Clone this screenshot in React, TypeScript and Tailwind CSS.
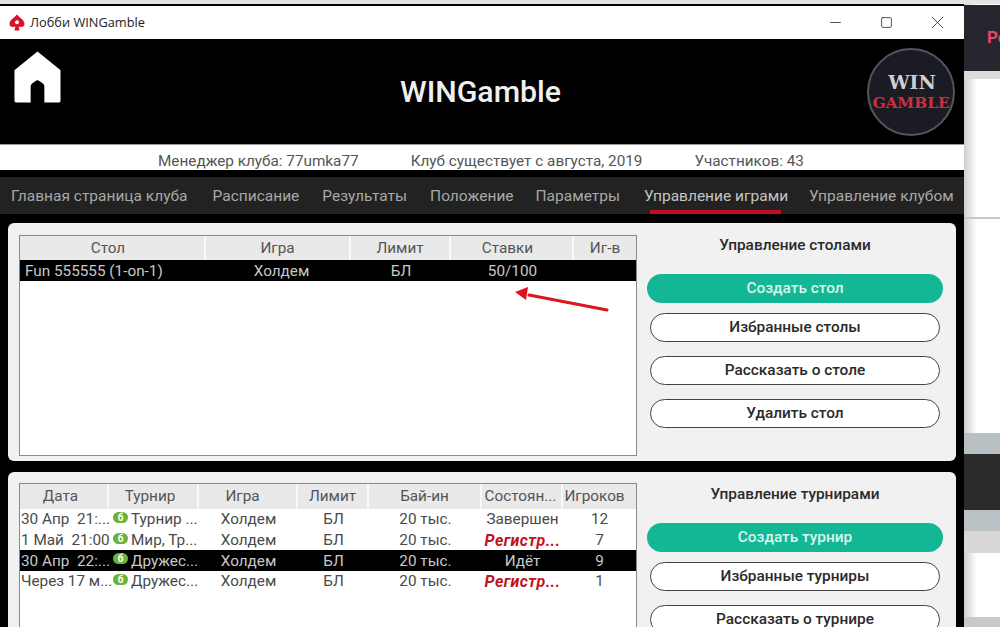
import React from 'react';
import { Minus, Square, X } from 'lucide-react';

type Cell = { text: string; align?: 'left' | 'center'; kind?: 'reg'; badge?: boolean };
type Row = { cells: Cell[]; selected?: boolean };

const navItems = [
  { label: 'Главная страница клуба', margin: 'ml-[11px]' },
  { label: 'Расписание', margin: 'ml-[25px]' },
  { label: 'Результаты', margin: 'ml-[23px]' },
  { label: 'Положение', margin: 'ml-[23px]' },
  { label: 'Параметры', margin: 'ml-[22px]' },
  { label: 'Управление играми', margin: 'ml-[24px]', active: true },
  { label: 'Управление клубом', margin: 'ml-[21px]' },
];

const tournamentRows: Row[] = [
  {
    cells: [
      { text: '30 Апр\u00a0\u00a021:...', align: 'left' },
      { text: 'Турнир ...', badge: true },
      { text: 'Холдем' },
      { text: 'БЛ' },
      { text: '20 тыс.' },
      { text: 'Завершен' },
      { text: '12' },
    ],
  },
  {
    cells: [
      { text: '1 Май\u00a0\u00a021:00', align: 'left' },
      { text: 'Мир, Тр...', badge: true },
      { text: 'Холдем' },
      { text: 'БЛ' },
      { text: '20 тыс.' },
      { text: 'Регистр...', kind: 'reg' },
      { text: '7' },
    ],
  },
  {
    selected: true,
    cells: [
      { text: '30 Апр\u00a0\u00a022:...', align: 'left' },
      { text: 'Дружес...', badge: true },
      { text: 'Холдем' },
      { text: 'БЛ' },
      { text: '20 тыс.' },
      { text: 'Идёт' },
      { text: '9' },
    ],
  },
  {
    cells: [
      { text: 'Через 17 м...', align: 'left' },
      { text: 'Дружес...', badge: true },
      { text: 'Холдем' },
      { text: 'БЛ' },
      { text: '20 тыс.' },
      { text: 'Регистр...', kind: 'reg' },
      { text: '1' },
    ],
  },
];

const HomeIcon = () => (
  <svg width="47" height="52" viewBox="0 0 48 53" className="block">
    <path
      d="M24 0.5 L47 19 Q47.5 19.5 47.5 20.5 L47.5 51 Q47.5 52.5 46 52.5 L31 52.5 L31 36 Q31 33 24 29.5 Q17 33 17 36 L17 52.5 L2 52.5 Q0.5 52.5 0.5 51 L0.5 20.5 Q0.5 19.5 1 19 Z"
      fill="#fff"
    />
  </svg>
);

const SpadeIcon = () => (
  <svg width="16" height="18" viewBox="0 0 16 18" className="block">
    <path
      d="M8 0.5 C10 3.5 15.5 5.5 15.5 10 C15.5 12.8 12.2 14 9.6 12.2 L10.6 16.5 L5.4 16.5 L6.4 12.2 C3.8 14 0.5 12.8 0.5 10 C0.5 5.5 6 3.5 8 0.5 Z"
      fill="#d8122a"
    />
    <circle cx="8" cy="8.2" r="2" fill="#fff" />
  </svg>
);

const Logo = () => (
  <div className="w-[88px] h-[88px] rounded-full bg-[#1b1b23] border-2 border-[#55555c] flex flex-col items-center justify-center font-['DejaVu_Serif',serif] font-bold">
    <div className="text-[#cfcfcf] text-[19px] leading-[22px] ml-[2px]">WIN</div>
    <div className="text-[#cf2f3c] text-[15.3px] leading-[20px]">GAMBLE</div>
  </div>
);

const GreenBadge = () => (
  <span className="inline-flex w-[15px] h-[11px] rounded-full bg-[#6bb23a] text-white text-[10px] leading-[11px] font-bold items-center justify-center mr-[3px] -mt-[5px] shrink-0">
    б
  </span>
);

const ActionButton = ({ label, primary }: { label: string; primary?: boolean }) =>
  primary ? (
    <button className="w-[296px] h-[29px] pt-[1px] rounded-full bg-[#14b795] text-[#d9f5ee] text-[15.4px] font-medium leading-none">
      {label}
    </button>
  ) : (
    <button className="w-[290px] h-[29px] pt-[1px] rounded-full bg-white border border-[#444] text-[#2a2a2a] text-[15.4px] font-medium leading-none">
      {label}
    </button>
  );

const HeaderCell = ({ label, className }: { label: string; className?: string }) => (
  <div className={`bg-[#e9e9e9] flex items-center justify-center text-[#555] text-[15.3px] border-r-2 border-white/70 last:border-r-0 whitespace-nowrap ${className ?? ''}`}>
    {label}
  </div>
);

const TournamentCell = ({ cell, selected }: { cell: Cell; selected?: boolean }) => {
  let tone = selected ? 'text-[#c8c8c8] text-[15.3px]' : 'text-[#4a4a4a] text-[15.3px]';
  if (cell.kind === 'reg') tone = 'text-[#c0141c] italic font-bold text-[16px] tracking-[0.4px]';
  return (
    <div className={`flex items-center whitespace-nowrap leading-[19px] pt-[1px] ${tone} ${cell.align === 'left' ? 'pl-[1px]' : cell.badge ? 'pl-[4px]' : 'justify-center'}`}>
      {cell.badge && <GreenBadge />}
      {cell.text}
    </div>
  );
};

export default function App() {
  return (
    <div className="w-[1000px] h-[627px] overflow-hidden flex flex-col bg-[#e2e2e2] font-['Roboto',sans-serif]">
      <div className="h-[4px] shrink-0 bg-[#e4e4e4]" />
      <div className="flex flex-1 min-h-0 items-start">
        {/* Lobby window */}
        <div className="w-[964px] h-[623px] shrink-0 bg-black flex flex-col">
          <div className="h-[2px] shrink-0 bg-black" />

          {/* Title bar */}
          <div className="h-[33px] shrink-0 bg-white flex items-center pl-[9px] text-[#222] font-['Open_Sans',sans-serif]">
            <SpadeIcon />
            <span className="ml-[5px] text-[12.8px]">Лобби WINGamble</span>
            <div className="ml-auto flex items-center pr-[1px] text-[#222]">
              <div className="w-[51px] flex justify-center"><Minus size={17} strokeWidth={1.1} /></div>
              <div className="w-[51px] flex justify-center"><Square size={13} strokeWidth={1.4} /></div>
              <div className="w-[51px] flex justify-center"><X size={21} strokeWidth={0.9} /></div>
            </div>
          </div>

          {/* Club header */}
          <div className="h-[105px] shrink-0 bg-black relative flex items-center justify-center">
            <div className="absolute left-[14px] top-[12px]">
              <HomeIcon />
            </div>
            <h1 className="text-[30.3px] font-medium text-[#f0f0f0] -ml-[3px]">WINGamble</h1>
            <div className="absolute left-[867px] top-[9px]">
              <Logo />
            </div>
          </div>

          {/* Club info */}
          <div className="h-[26px] shrink-0 bg-white border-t border-[#999] flex items-center text-[15.3px] text-[#555] pl-[158px] pt-[7px]">
            <span>Менеджер клуба: 77umka77</span>
            <span className="ml-[52px]">Клуб существует с августа, 2019</span>
            <span className="ml-[52px]">Участников: 43</span>
          </div>

          {/* Tabs */}
          <div className="h-[37px] shrink-0 mt-[7px] bg-[#222222] flex items-stretch text-[15.5px] text-[#a8a8a8] whitespace-nowrap">
            {navItems.map((item) => (
              <div key={item.label} className={`relative flex items-center pt-[2px] ${item.margin} ${item.active ? 'text-[#c4c4c4]' : ''}`}>
                {item.label}
                {item.active && <div className="absolute left-[6px] right-[7px] bottom-0 h-[4px] bg-[#c20f25]" />}
              </div>
            ))}
          </div>

          {/* Tables panel */}
          <div className="h-[238px] shrink-0 mt-[9px] mx-[8px] bg-[#f1f1f1] rounded-[6px] flex pl-[11px] pt-[12px]">
            <div className="relative w-[618px] h-[221px] bg-white border border-[#8a8a8a] shrink-0">
              <div className="grid grid-cols-[186px_145px_100px_123px_1fr] h-[24px]">
                <HeaderCell label="Стол" className="pr-[8px]" />
                <HeaderCell label="Игра" />
                <HeaderCell label="Лимит" />
                <HeaderCell label="Ставки" className="pr-[8px]" />
                <HeaderCell label="Иг-в" />
              </div>
              <div className="grid grid-cols-[186px_145px_100px_123px_1fr] h-[21px] bg-black text-[#c8c8c8] text-[15.3px] items-center">
                <div className="pl-[5px] whitespace-nowrap">Fun 555555 (1-on-1)</div>
                <div className="text-center pl-[6px]">Холдем</div>
                <div className="text-center">БЛ</div>
                <div className="text-center">50/100</div>
                <div />
              </div>
              <svg width="100" height="30" viewBox="0 0 100 30" className="absolute left-[494px] top-[49px]">
                <path d="M93 25 L15 10" stroke="#de1520" strokeWidth="3" strokeLinecap="round" />
                <path d="M1 7 L14 2 L12 15 Z" fill="#de1520" />
              </svg>
            </div>
            <div className="flex-1 flex flex-col items-center pl-[10px] pr-[14px]">
              <div className="h-[22px] flex items-center text-[15.4px] font-medium text-[#2a2a2a]">Управление столами</div>
              <div className="mt-[17px] flex flex-col items-center gap-[14px]">
                <ActionButton label="Создать стол" primary />
                <div className="-mt-[4px]">
                  <ActionButton label="Избранные столы" />
                </div>
                <ActionButton label="Рассказать о столе" />
                <ActionButton label="Удалить стол" />
              </div>
            </div>
          </div>

          {/* Tournaments panel */}
          <div className="h-[240px] shrink-0 mt-[11px] mx-[8px] bg-[#f1f1f1] rounded-[6px] flex pl-[11px] pt-[11px]">
            <div className="w-[618px] h-[221px] bg-white border border-[#8a8a8a] shrink-0">
              <div className="grid grid-cols-[89px_90px_99px_71px_113px_81px_1fr] h-[25px]">
                <HeaderCell label="Дата" className="pr-[6px]" />
                <HeaderCell label="Турнир" className="pr-[6px]" />
                <HeaderCell label="Игра" className="pr-[10px]" />
                <HeaderCell label="Лимит" />
                <HeaderCell label="Бай-ин" />
                <HeaderCell label="Состоян..." className="pr-[2px]" />
                <HeaderCell label="Игроков" className="pr-[10px]" />
              </div>
              {tournamentRows.map((row, i) => (
                <div key={i} className={`grid grid-cols-[89px_90px_99px_71px_113px_81px_1fr] h-[20.7px] ${row.selected ? 'bg-black' : ''}`}>
                  {row.cells.map((cell, j) => (
                    <TournamentCell key={j} cell={cell} selected={row.selected} />
                  ))}
                </div>
              ))}
            </div>
            <div className="flex-1 flex flex-col items-center pl-[10px] pr-[14px]">
              <div className="h-[22px] flex items-center pt-[1px] text-[15.4px] font-medium text-[#2a2a2a]">Управление турнирами</div>
              <div className="mt-[18px] flex flex-col items-center gap-[14px]">
                <ActionButton label="Создать турнир" primary />
                <div className="-mt-[4px]">
                  <ActionButton label="Избранные турниры" />
                </div>
                <ActionButton label="Рассказать о турнире" />
              </div>
            </div>
          </div>
        </div>

        {/* Page behind the window */}
        <div className="flex-1 h-[623px] flex flex-col bg-gradient-to-r from-[#cfcfcf] via-white via-30% to-white">
          <div className="h-[66px] shrink-0 mt-[1px] bg-[#26262e] flex items-center pl-[23px] text-[17px] font-bold text-[#e8476a] overflow-hidden">
            Ре
          </div>
          <div className="h-[8px] shrink-0 bg-[#dcdcdc]" />
          <div className="h-[138px] shrink-0" />
          <div className="h-[2px] shrink-0 bg-[#c8c8c8]" />
          <div className="h-[214px] shrink-0" />
          <div className="h-[21px] shrink-0 bg-[#b9c0c3]" />
          <div className="h-[56px] shrink-0 bg-[#2b2b2b]" />
          <div className="h-[21px] shrink-0 bg-[#b9c1c5]" />
          <div className="h-[22px] shrink-0 bg-[#d8d8d8]" />
          <div className="h-[64px] shrink-0" />
          <div className="flex-1 bg-[#c9c9c9]" />
        </div>
      </div>
    </div>
  );
}
